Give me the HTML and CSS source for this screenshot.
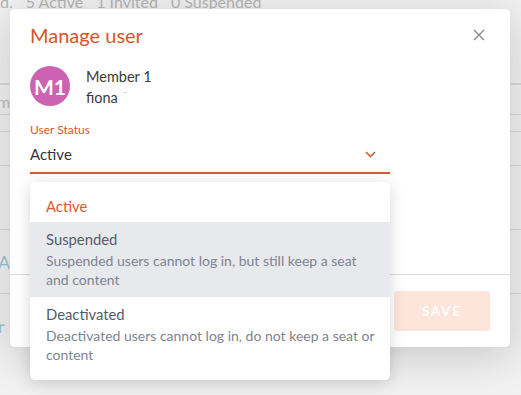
FILE: index.html
```html
<!DOCTYPE html>
<html lang="en">
  <head>
    <meta charset="UTF-8" />
    <meta name="viewport" content="width=device-width, initial-scale=1.0" />
    <title>Manage user</title>
    <link rel="stylesheet" href="styles.css">
  </head>
  <body>
    <!-- Page behind the dialog -->
    <div class="page">
      <div class="stats">
        <span>d.</span>
        <span>5 Active</span>
        <span>1 Invited</span>
        <span>0 Suspended</span>
      </div>
      <div class="rows">
        <div class="row row-head"></div>
        <div class="row row-name"><span class="cell-text">m</span></div>
        <div class="row row-thin"></div>
        <div class="row row-mid"></div>
        <div class="row row-tall"></div>
        <div class="row row-tall"><span class="cell-link">Ac</span></div>
        <div class="row row-tall"><span class="cell-link">r</span></div>
      </div>
    </div>
    <div class="overlay"></div>

    <!-- Dialog -->
    <div class="modal">
      <div class="modal-body">
        <div class="modal-head">
          <h2>Manage user</h2>
          <button class="close" aria-label="Close">
            <svg width="12" height="12" viewBox="0 0 12 12">
              <path d="M1 1L11 11M11 1L1 11" stroke="#868b98" stroke-width="1.4" fill="none" />
            </svg>
          </button>
        </div>

        <div class="user">
          <div class="avatar">M1</div>
          <div class="user-info">
            <div class="name">Member 1</div>
            <div class="email">fiona<span class="redacted"></span></div>
          </div>
        </div>

        <div class="field">
          <label>User Status</label>
          <div class="select">
            <span>Active</span>
            <svg width="11" height="7" viewBox="0 0 11 7">
              <path d="M1 1L5.5 5.5L10 1" stroke="#dd5a2c" stroke-width="1.6" fill="none" />
            </svg>
          </div>

          <ul class="menu">
            <li class="option selected">
              <div class="option-title">Active</div>
            </li>
            <li class="option hover">
              <div class="option-title">Suspended</div>
              <div class="option-desc">Suspended users cannot log in, but still keep a seat and content</div>
            </li>
            <li class="option">
              <div class="option-title">Deactivated</div>
              <div class="option-desc">Deactivated users cannot log in, do not keep a seat or content</div>
            </li>
          </ul>
        </div>
      </div>

      <div class="modal-foot">
        <button class="save">SAVE</button>
      </div>
    </div>
  </body>
</html>
```

FILE: styles.css
```css
body {
  margin: 0;
  width: 521px;
  height: 395px;
  overflow: hidden;
  position: relative;
  font-family: Lato, "Noto Sans", sans-serif;
  background-color: #fbfbfb;
  color: #333;
}

/* Page behind */
.page {
  height: 100%;
}

.stats {
  display: flex;
  gap: 13px;
  margin-top: -10px;
  font-size: 16px;
  color: #bdbdbd;
  height: 24px;
  line-height: 24px;
}

.rows {
  margin-top: 69px;
}

.row {
  border-top: 1px solid #e2e2e2;
  box-sizing: border-box;
  display: flex;
  align-items: center;
}

.row-head {
  height: 0;
}

.row-name {
  height: 30px;
}

.row-thin {
  height: 17px;
}

.row-mid {
  height: 34px;
}

.row-tall {
  height: 64px;
}

.cell-text {
  font-size: 16px;
  color: #c4c4c4;
  margin-left: -3px;
  margin-top: 4px;
}

.cell-link {
  font-size: 18px;
  color: #9fd0e0;
  margin-left: -2px;
}

.overlay {
  position: absolute;
  inset: 0;
  background-color: rgba(0, 0, 0, 0.04);
}

/* Dialog */
.modal {
  position: absolute;
  top: 9px;
  left: 10px;
  width: 500px;
  background-color: #fff;
  border-radius: 5px;
  box-shadow: 0 8px 40px rgba(0, 0, 0, 0.18);
}

.modal-body {
  padding: 12px 20px 100px;
}

.modal-head {
  display: flex;
  align-items: center;
  justify-content: space-between;
}

.modal-head h2 {
  margin: 0;
  font-size: 20px;
  line-height: 28px;
  font-weight: 400;
  color: #d9542b;
}

.close {
  background: none;
  border: none;
  padding: 0;
  margin-right: 5px;
  display: flex;
}

.user {
  display: flex;
  gap: 16px;
  margin-top: 17px;
}

.avatar {
  width: 40px;
  height: 40px;
  border-radius: 50%;
  background-color: #cd62b2;
  color: #fff;
  font-size: 21px;
  font-weight: 700;
  display: flex;
  align-items: center;
  justify-content: center;
}

.user-info {
  font-size: 14.5px;
  line-height: 21px;
  color: #3b3b3b;
}

.redacted {
  display: inline-block;
  width: 2px;
  height: 1px;
  margin-left: 6px;
  vertical-align: 10px;
  background-color: #ccc;
}

/* Select field */
.field {
  position: relative;
  width: 360px;
  margin-top: 14px;
}

.field label {
  display: block;
  font-size: 12px;
  line-height: 16px;
  color: #d9542b;
}

.select {
  display: flex;
  align-items: center;
  justify-content: space-between;
  margin-top: 6px;
  padding: 0 14px 8px 0;
  font-size: 15px;
  line-height: 20px;
  color: #333;
  border-bottom: 2px solid #da5a2e;
}

.menu {
  position: absolute;
  top: calc(100% + 8px);
  left: 0;
  right: 0;
  margin: 0;
  padding: 8px 0;
  list-style: none;
  background-color: #fff;
  border-radius: 5px;
  box-shadow: 0 3px 16px rgba(0, 0, 0, 0.16);
  z-index: 2;
}

.option {
  padding: 7px 12px 8px 16px;
}

.option.selected {
  padding: 6px 16px;
}

.option.hover {
  background-color: #e7e9ed;
}

.option-title {
  font-size: 14.8px;
  line-height: 20px;
  color: #565c6a;
}

.option.selected .option-title {
  color: #dd5a2c;
}

.option-desc {
  margin-top: 2px;
  font-size: 14px;
  line-height: 19px;
  color: #80848f;
}

/* Footer */
.modal-foot {
  display: flex;
  justify-content: flex-end;
  padding: 16px 20px;
  border-top: 1px solid #dadada;
}

.save {
  width: 96px;
  height: 40px;
  border: none;
  border-radius: 3px;
  background-color: #fde5dc;
  color: #fff;
  font-family: Lato, sans-serif;
  font-size: 13px;
  font-weight: 700;
  letter-spacing: 2px;
}
```
